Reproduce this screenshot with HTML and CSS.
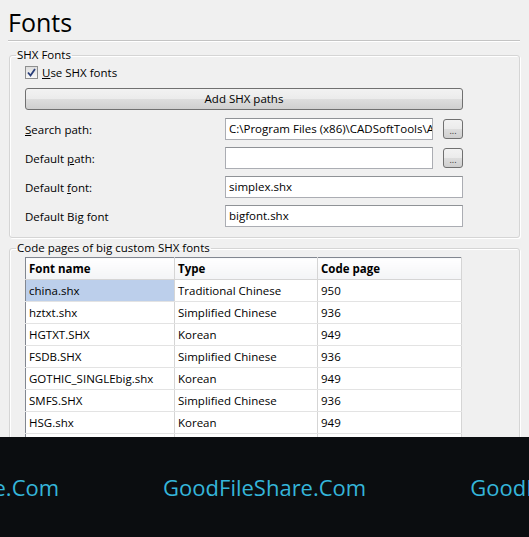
FILE: index.html
```html
<!DOCTYPE html>
<html lang="en">

<head>
    <meta charset="UTF-8">
    <title>Fonts</title>
    <link rel="stylesheet" href="styles.css">
</head>

<body>
    <div class="page">
        <h1 class="title">Fonts</h1>

        <fieldset class="group shx">
            <legend>SHX Fonts</legend>
            <label class="check">
                <span class="box">
                    <svg width="9" height="9" viewBox="0 0 9 9"><path d="M1 4.5 L3.5 7.5 L8 1" fill="none" stroke="#2a3f7a" stroke-width="1.8"/></svg>
                </span>
                <span><u>U</u>se SHX fonts</span>
            </label>

            <button class="wide-btn">Add SHX paths</button>

            <div class="form">
                <span class="lbl"><u>S</u>earch path:</span>
                <div class="field">C:\Program Files (x86)\CADSoftTools\A</div>
                <button class="dots">...</button>

                <span class="lbl">Default <u>p</u>ath:</span>
                <div class="field"></div>
                <button class="dots">...</button>

                <span class="lbl">Default <u>f</u>ont:</span>
                <div class="field span2">simplex.shx</div>

                <span class="lbl">Default Big font</span>
                <div class="field span2">bigfont.shx</div>
            </div>
        </fieldset>

        <fieldset class="group codes">
            <legend>Code pages of big custom SHX fonts</legend>
            <table class="grid">
                <thead>
                    <tr><th class="c1">Font name</th><th class="c2">Type</th><th>Code page</th></tr>
                </thead>
                <tbody>
                    <tr><td class="sel">china.shx</td><td>Traditional Chinese</td><td>950</td></tr>
                    <tr><td>hztxt.shx</td><td>Simplified Chinese</td><td>936</td></tr>
                    <tr><td>HGTXT.SHX</td><td>Korean</td><td>949</td></tr>
                    <tr><td>FSDB.SHX</td><td>Simplified Chinese</td><td>936</td></tr>
                    <tr><td>GOTHIC_SINGLEbig.shx</td><td>Korean</td><td>949</td></tr>
                    <tr><td>SMFS.SHX</td><td>Simplified Chinese</td><td>936</td></tr>
                    <tr><td>HSG.shx</td><td>Korean</td><td>949</td></tr>
                    <tr><td></td><td></td><td></td></tr>
                </tbody>
            </table>
        </fieldset>
    </div>

    <div class="banner">
        <span>GoodFileShare.Com</span>
        <span>GoodFileShare.Com</span>
        <span>GoodFileShare.Com</span>
    </div>
</body>
</html>
```

FILE: styles.css
```css
body {
    margin: 0;
    width: 529px;
    height: 537px;
    overflow: hidden;
    background-color: #f0f0f0;
    font-family: "Open Sans", "Noto Sans", sans-serif;
    font-size: 11.5px;
    color: #000;
}

.page {
    height: 437px;
    overflow: hidden;
    padding: 0 9px 0 8px;
}

.title {
    margin: 0;
    padding-top: 5px;
    height: 35px;
    font-size: 25px;
    font-weight: normal;
    line-height: 34px;
    border-bottom: 1px solid #c4c4c4;
    box-shadow: 0 1px 0 #fff;
}

.group {
    margin: 0 0 0 1px;
    border: 1px solid #d5d5d5;
    border-radius: 3px;
    box-shadow: inset 1px 1px 0 #fff, 1px 1px 0 #fff;
    padding: 0 0 0 15px;
}

.group legend {
    padding: 0 1px;
    margin-left: -9px;
    line-height: 14px;
}

.shx {
    margin-top: 7px;
    padding-bottom: 10px;
}

.codes {
    margin-top: 3px;
    height: 200px;
}

.check {
    display: flex;
    align-items: center;
    gap: 4px;
    margin-top: 3px;
    height: 14px;
}

.check .box {
    width: 11px;
    height: 11px;
    border: 1px solid #8e8f8f;
    background: linear-gradient(#dedede, #f8f8f8);
    display: flex;
    align-items: center;
    justify-content: center;
}

.wide-btn,
.dots {
    font-family: inherit;
    font-size: 11.5px;
    color: #000;
    border: 1px solid #707070;
    border-radius: 3px;
    background: linear-gradient(#f2f2f2 0%, #ebebeb 50%, #dddddd 51%, #cfcfcf 100%);
    padding: 0;
}

.wide-btn {
    display: block;
    margin-top: 9px;
    width: 438px;
    height: 22px;
    line-height: 18px;
}

.form {
    display: grid;
    grid-template-columns: 190px 208px 20px;
    column-gap: 10px;
    row-gap: 7px;
    margin-top: 8px;
    align-items: center;
}

.field {
    height: 20px;
    line-height: 20px;
    border: 1px solid #abadb3;
    border-top-color: #8f9296;
    background: #fff;
    padding: 0 3px;
    overflow: hidden;
    white-space: nowrap;
}

.span2 {
    grid-column: span 2;
}

.dots {
    width: 20px;
    height: 20px;
    font-size: 9px;
    line-height: 22px;
    color: #333;
}

.grid {
    margin-top: 2px;
    width: 437px;
    border-collapse: collapse;
    border: 1px solid #828790;
    background: #fff;
}

.grid th,
.grid td {
    height: 21px;
    padding: 0 0 0 3px;
    text-align: left;
    white-space: nowrap;
    border-right: 1px solid #d5d5d5;
    border-bottom: 1px solid #e3e3e3;
}

.grid th {
    font-weight: bold;
    background: linear-gradient(#ffffff, #f3f4f6);
    border-bottom: 1px solid #d5d5d5;
}

.grid .c1 {
    width: 145px;
}

.grid .c2 {
    width: 139px;
}

.grid td.sel {
    background: #bccfeb;
}

.banner {
    height: 100px;
    background: #0b0d10;
    display: flex;
    align-items: center;
    gap: 104px;
    margin-left: -144px;
    overflow: hidden;
    white-space: nowrap;
    font-family: "Open Sans", sans-serif;
    font-size: 22px;
    color: #35b5da;
}
```
